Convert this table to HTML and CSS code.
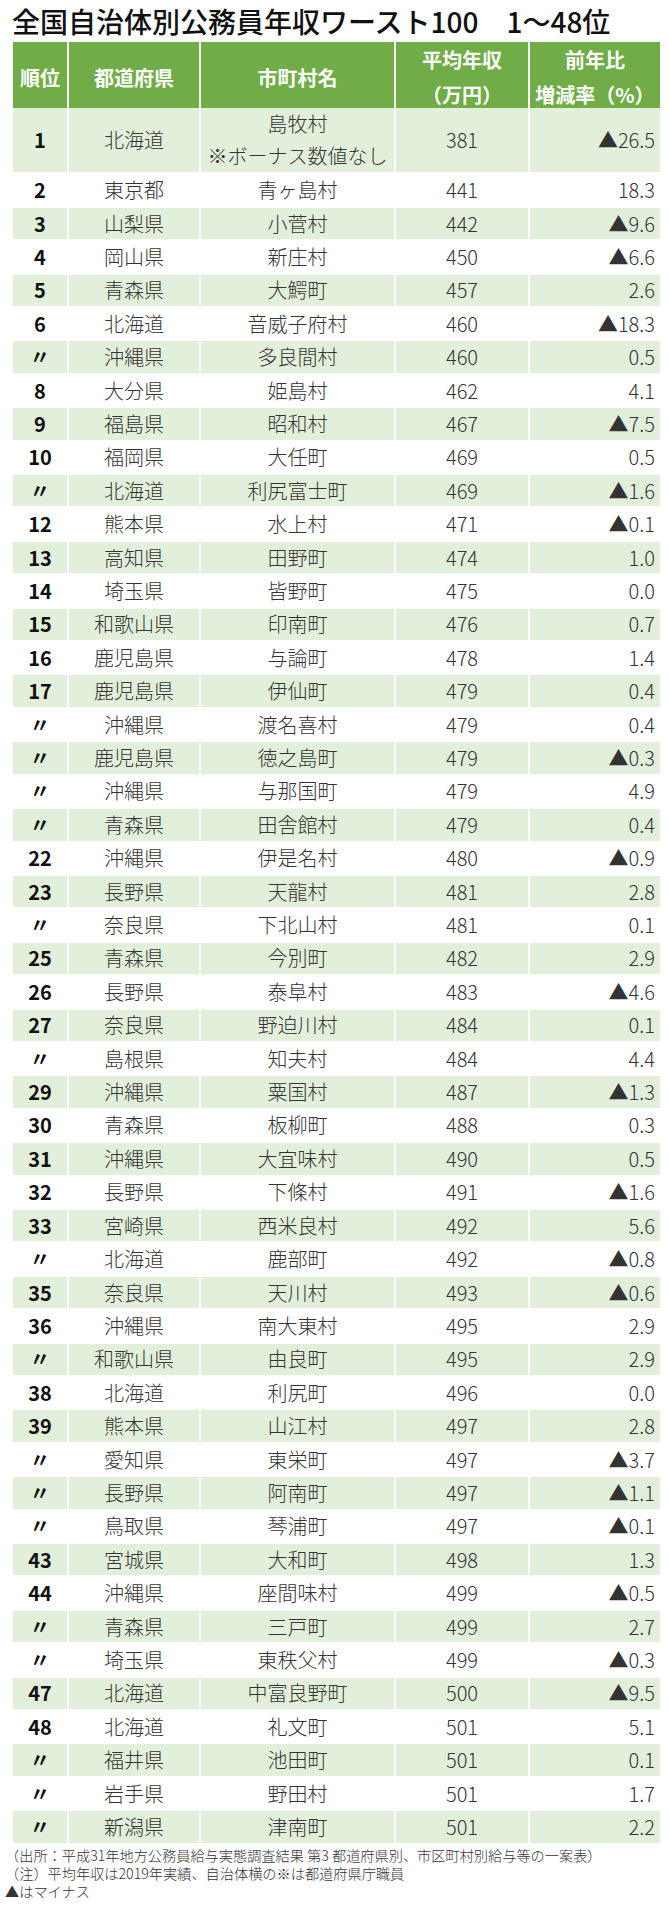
FILE: index.html
```html
<!DOCTYPE html>
<html lang="ja">
<head>
<meta charset="utf-8">
<title>全国自治体別公務員年収ワースト100 1～48位</title>
<link rel="stylesheet" href="styles.css">
</head>
<body>
<div class="page">
  <h1 class="title">全国自治体別公務員年収ワースト100　1～48位</h1>
  <div class="table">
    <div class="row head">
      <div class="cell">順位</div>
      <div class="cell">都道府県</div>
      <div class="cell">市町村名</div>
      <div class="cell two">平均年収<br>（万円）</div>
      <div class="cell two">前年比<br>増減率（%）</div>
    </div>
    <div class="row first alt">
      <div class="cell rank">1</div><div class="cell">北海道</div><div class="cell two-body">島牧村<br>※ボーナス数値なし</div><div class="cell">381</div><div class="cell rate">▲26.5</div>
    </div>
    <div class="row"><div class="cell rank">2</div><div class="cell">東京都</div><div class="cell">青ヶ島村</div><div class="cell">441</div><div class="cell rate">18.3</div></div>
    <div class="row alt"><div class="cell rank">3</div><div class="cell">山梨県</div><div class="cell">小菅村</div><div class="cell">442</div><div class="cell rate">▲9.6</div></div>
    <div class="row"><div class="cell rank">4</div><div class="cell">岡山県</div><div class="cell">新庄村</div><div class="cell">450</div><div class="cell rate">▲6.6</div></div>
    <div class="row alt"><div class="cell rank">5</div><div class="cell">青森県</div><div class="cell">大鰐町</div><div class="cell">457</div><div class="cell rate">2.6</div></div>
    <div class="row"><div class="cell rank">6</div><div class="cell">北海道</div><div class="cell">音威子府村</div><div class="cell">460</div><div class="cell rate">▲18.3</div></div>
    <div class="row alt"><div class="cell rank">〃</div><div class="cell">沖縄県</div><div class="cell">多良間村</div><div class="cell">460</div><div class="cell rate">0.5</div></div>
    <div class="row"><div class="cell rank">8</div><div class="cell">大分県</div><div class="cell">姫島村</div><div class="cell">462</div><div class="cell rate">4.1</div></div>
    <div class="row alt"><div class="cell rank">9</div><div class="cell">福島県</div><div class="cell">昭和村</div><div class="cell">467</div><div class="cell rate">▲7.5</div></div>
    <div class="row"><div class="cell rank">10</div><div class="cell">福岡県</div><div class="cell">大任町</div><div class="cell">469</div><div class="cell rate">0.5</div></div>
    <div class="row alt"><div class="cell rank">〃</div><div class="cell">北海道</div><div class="cell">利尻富士町</div><div class="cell">469</div><div class="cell rate">▲1.6</div></div>
    <div class="row"><div class="cell rank">12</div><div class="cell">熊本県</div><div class="cell">水上村</div><div class="cell">471</div><div class="cell rate">▲0.1</div></div>
    <div class="row alt"><div class="cell rank">13</div><div class="cell">高知県</div><div class="cell">田野町</div><div class="cell">474</div><div class="cell rate">1.0</div></div>
    <div class="row"><div class="cell rank">14</div><div class="cell">埼玉県</div><div class="cell">皆野町</div><div class="cell">475</div><div class="cell rate">0.0</div></div>
    <div class="row alt"><div class="cell rank">15</div><div class="cell">和歌山県</div><div class="cell">印南町</div><div class="cell">476</div><div class="cell rate">0.7</div></div>
    <div class="row"><div class="cell rank">16</div><div class="cell">鹿児島県</div><div class="cell">与論町</div><div class="cell">478</div><div class="cell rate">1.4</div></div>
    <div class="row alt"><div class="cell rank">17</div><div class="cell">鹿児島県</div><div class="cell">伊仙町</div><div class="cell">479</div><div class="cell rate">0.4</div></div>
    <div class="row"><div class="cell rank">〃</div><div class="cell">沖縄県</div><div class="cell">渡名喜村</div><div class="cell">479</div><div class="cell rate">0.4</div></div>
    <div class="row alt"><div class="cell rank">〃</div><div class="cell">鹿児島県</div><div class="cell">徳之島町</div><div class="cell">479</div><div class="cell rate">▲0.3</div></div>
    <div class="row"><div class="cell rank">〃</div><div class="cell">沖縄県</div><div class="cell">与那国町</div><div class="cell">479</div><div class="cell rate">4.9</div></div>
    <div class="row alt"><div class="cell rank">〃</div><div class="cell">青森県</div><div class="cell">田舎館村</div><div class="cell">479</div><div class="cell rate">0.4</div></div>
    <div class="row"><div class="cell rank">22</div><div class="cell">沖縄県</div><div class="cell">伊是名村</div><div class="cell">480</div><div class="cell rate">▲0.9</div></div>
    <div class="row alt"><div class="cell rank">23</div><div class="cell">長野県</div><div class="cell">天龍村</div><div class="cell">481</div><div class="cell rate">2.8</div></div>
    <div class="row"><div class="cell rank">〃</div><div class="cell">奈良県</div><div class="cell">下北山村</div><div class="cell">481</div><div class="cell rate">0.1</div></div>
    <div class="row alt"><div class="cell rank">25</div><div class="cell">青森県</div><div class="cell">今別町</div><div class="cell">482</div><div class="cell rate">2.9</div></div>
    <div class="row"><div class="cell rank">26</div><div class="cell">長野県</div><div class="cell">泰阜村</div><div class="cell">483</div><div class="cell rate">▲4.6</div></div>
    <div class="row alt"><div class="cell rank">27</div><div class="cell">奈良県</div><div class="cell">野迫川村</div><div class="cell">484</div><div class="cell rate">0.1</div></div>
    <div class="row"><div class="cell rank">〃</div><div class="cell">島根県</div><div class="cell">知夫村</div><div class="cell">484</div><div class="cell rate">4.4</div></div>
    <div class="row alt"><div class="cell rank">29</div><div class="cell">沖縄県</div><div class="cell">粟国村</div><div class="cell">487</div><div class="cell rate">▲1.3</div></div>
    <div class="row"><div class="cell rank">30</div><div class="cell">青森県</div><div class="cell">板柳町</div><div class="cell">488</div><div class="cell rate">0.3</div></div>
    <div class="row alt"><div class="cell rank">31</div><div class="cell">沖縄県</div><div class="cell">大宜味村</div><div class="cell">490</div><div class="cell rate">0.5</div></div>
    <div class="row"><div class="cell rank">32</div><div class="cell">長野県</div><div class="cell">下條村</div><div class="cell">491</div><div class="cell rate">▲1.6</div></div>
    <div class="row alt"><div class="cell rank">33</div><div class="cell">宮崎県</div><div class="cell">西米良村</div><div class="cell">492</div><div class="cell rate">5.6</div></div>
    <div class="row"><div class="cell rank">〃</div><div class="cell">北海道</div><div class="cell">鹿部町</div><div class="cell">492</div><div class="cell rate">▲0.8</div></div>
    <div class="row alt"><div class="cell rank">35</div><div class="cell">奈良県</div><div class="cell">天川村</div><div class="cell">493</div><div class="cell rate">▲0.6</div></div>
    <div class="row"><div class="cell rank">36</div><div class="cell">沖縄県</div><div class="cell">南大東村</div><div class="cell">495</div><div class="cell rate">2.9</div></div>
    <div class="row alt"><div class="cell rank">〃</div><div class="cell">和歌山県</div><div class="cell">由良町</div><div class="cell">495</div><div class="cell rate">2.9</div></div>
    <div class="row"><div class="cell rank">38</div><div class="cell">北海道</div><div class="cell">利尻町</div><div class="cell">496</div><div class="cell rate">0.0</div></div>
    <div class="row alt"><div class="cell rank">39</div><div class="cell">熊本県</div><div class="cell">山江村</div><div class="cell">497</div><div class="cell rate">2.8</div></div>
    <div class="row"><div class="cell rank">〃</div><div class="cell">愛知県</div><div class="cell">東栄町</div><div class="cell">497</div><div class="cell rate">▲3.7</div></div>
    <div class="row alt"><div class="cell rank">〃</div><div class="cell">長野県</div><div class="cell">阿南町</div><div class="cell">497</div><div class="cell rate">▲1.1</div></div>
    <div class="row"><div class="cell rank">〃</div><div class="cell">鳥取県</div><div class="cell">琴浦町</div><div class="cell">497</div><div class="cell rate">▲0.1</div></div>
    <div class="row alt"><div class="cell rank">43</div><div class="cell">宮城県</div><div class="cell">大和町</div><div class="cell">498</div><div class="cell rate">1.3</div></div>
    <div class="row"><div class="cell rank">44</div><div class="cell">沖縄県</div><div class="cell">座間味村</div><div class="cell">499</div><div class="cell rate">▲0.5</div></div>
    <div class="row alt"><div class="cell rank">〃</div><div class="cell">青森県</div><div class="cell">三戸町</div><div class="cell">499</div><div class="cell rate">2.7</div></div>
    <div class="row"><div class="cell rank">〃</div><div class="cell">埼玉県</div><div class="cell">東秩父村</div><div class="cell">499</div><div class="cell rate">▲0.3</div></div>
    <div class="row alt"><div class="cell rank">47</div><div class="cell">北海道</div><div class="cell">中富良野町</div><div class="cell">500</div><div class="cell rate">▲9.5</div></div>
    <div class="row"><div class="cell rank">48</div><div class="cell">北海道</div><div class="cell">礼文町</div><div class="cell">501</div><div class="cell rate">5.1</div></div>
    <div class="row alt"><div class="cell rank">〃</div><div class="cell">福井県</div><div class="cell">池田町</div><div class="cell">501</div><div class="cell rate">0.1</div></div>
    <div class="row"><div class="cell rank">〃</div><div class="cell">岩手県</div><div class="cell">野田村</div><div class="cell">501</div><div class="cell rate">1.7</div></div>
    <div class="row alt"><div class="cell rank">〃</div><div class="cell">新潟県</div><div class="cell">津南町</div><div class="cell">501</div><div class="cell rate">2.2</div></div>
  </div>
  <div class="notes">
    <p>（出所：平成31年地方公務員給与実態調査結果 第3 都道府県別、市区町村別給与等の一案表）</p>
    <p>（注）平均年収は2019年実績、自治体横の※は都道府県庁職員</p>
    <p>▲はマイナス</p>
  </div>
</div>
</body>
</html>
```

FILE: styles.css
```css
html, body {
  margin: 0;
  padding: 0;
  background: #ffffff;
}

.page {
  width: 670px;
  font-family: "Noto Sans CJK JP", "Noto Sans", sans-serif;
  color: #333333;
}

.title {
  margin: 0;
  height: 42px;
  padding-left: 12px;
  font-size: 28px;
  line-height: 42px;
  font-weight: 500;
  color: #111111;
  white-space: nowrap;
}

.table {
  display: flex;
  flex-direction: column;
  gap: 2px;
  margin-left: 13px;
  width: 647px;
}

.row {
  display: grid;
  grid-template-columns: 54px 130px 193px 132px 130px;
  column-gap: 2px;
  height: 31.42px;
}

.row.head {
  height: 64px;
}

.row.first {
  height: 64.4px;
}

.cell {
  display: flex;
  align-items: center;
  justify-content: center;
  text-align: center;
  font-size: 20px;
  font-weight: 300;
  line-height: 24px;
  white-space: nowrap;
}

.head .cell {
  background: #70ad47;
  color: #ffffff;
  font-weight: 700;
  line-height: 35px;
}

.alt .cell {
  background: #e2efda;
}

.two-body {
  line-height: 32px;
}

.rank {
  font-weight: 700;
  color: #111111;
}

.rate {
  justify-content: flex-end;
  padding-right: 5px;
}

.notes {
  padding: 3px 0 0 5px;
  font-size: 14.2px;
  line-height: 18px;
  font-weight: 300;
  color: #333333;
}

.notes p {
  margin: 0;
  white-space: nowrap;
}
```
